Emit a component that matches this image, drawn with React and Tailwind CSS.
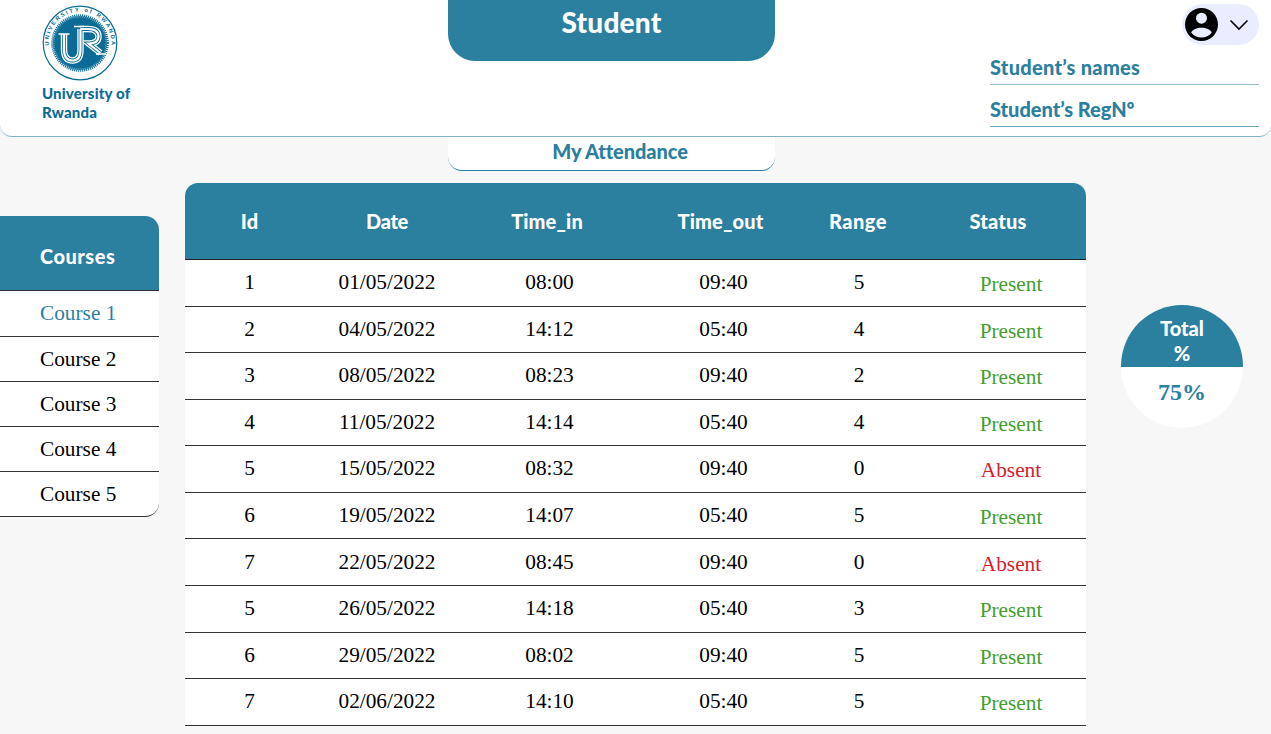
import React from "react";

const display = "font-['Lato',sans-serif] font-black whitespace-nowrap";
const rows = [
  ["1", "01/05/2022", "08:00", "09:40", "5", "Present"],
  ["2", "04/05/2022", "14:12", "05:40", "4", "Present"],
  ["3", "08/05/2022", "08:23", "09:40", "2", "Present"],
  ["4", "11/05/2022", "14:14", "05:40", "4", "Present"],
  ["5", "15/05/2022", "08:32", "09:40", "0", "Absent"],
  ["6", "19/05/2022", "14:07", "05:40", "5", "Present"],
  ["7", "22/05/2022", "08:45", "09:40", "0", "Absent"],
  ["5", "26/05/2022", "14:18", "05:40", "3", "Present"],
  ["6", "29/05/2022", "08:02", "09:40", "5", "Present"],
  ["7", "02/06/2022", "14:10", "05:40", "5", "Present"],
];
const courses = ["Course 1", "Course 2", "Course 3", "Course 4", "Course 5"];
const columns = "grid grid-cols-[129px_146px_179px_169px_102px_176px] items-center text-center";

const monogram = (
  <>
    <path d="M22 29v15c0 8 3 11.500 8.500 11.500s8-3.500 8-10.500V24" />
    <path d="M38.500 24h7.500c7 0 10.500 2.500 10.500 7.500s-3.500 7-10 7l12 9.500" />
  </>
);

function Seal() {
  return (
    <svg className="block h-[76px] w-[76px]" viewBox="0 0 76 76">
      <circle cx="38" cy="38" r="36.8" fill="white" stroke="#0a6c96" strokeWidth="1.2" />
      <circle cx="38" cy="38" r="27" fill="#0a6c96" />
      <circle cx="38" cy="38" r="27.6" fill="none" stroke="#0a6c96" strokeWidth="2.4" strokeDasharray="1.1 0.9" />
      <circle cx="38" cy="38" r="26" fill="none" stroke="#a9cbd9" strokeWidth="0.8" strokeDasharray="1 1" />
      <path id="seal-arc" d="M7.080 43.450 A31.4 31.4 0 1 1 68.920 43.450" fill="none" />
      <text fill="#0a6c96" fontSize="5.6" fontWeight="700" fontFamily="Liberation Sans, sans-serif">
        <textPath href="#seal-arc" startOffset="3" textLength="103">UNIVERSITY of RWANDA</textPath>
      </text>
      <g fill="none" stroke="white" strokeWidth="6.4">{monogram}</g>
      <g fill="none" stroke="#0a6c96" strokeWidth="3.8">{monogram}</g>
      <g fill="none" stroke="white" strokeWidth="2.2">{monogram}</g>
      <path d="M16.500 29h11M32 21.500h10M54 49h10" stroke="white" strokeWidth="1.300" fill="none" />
    </svg>
  );
}

export default function App() {
  return (
    <div className="h-[734px] w-full overflow-hidden bg-[#f7f7f7] font-['Liberation_Serif',serif] text-[21.3px] leading-6 text-black">
      <header className="flex h-[137px] justify-between rounded-b-[12px] border-b border-[#80b2c5] bg-white">
        <div className="w-[448px] pl-[42px] pt-[5px]">
          <Seal />
          <div className={`${display} pt-[3px] text-[15px] leading-[19px] tracking-[0.18px] text-[#0a6c96]`}>University of<br />Rwanda</div>
        </div>
        <div className="flex h-[61px] w-[327px] justify-center rounded-b-[27px] bg-[#2b7f9f] pt-[4px]">
          <h1 className={`${display} text-[28px] leading-[36px] tracking-[0.2px] text-white`}>Student</h1>
        </div>
        <div className="flex w-[496px] flex-col pl-[215px] pr-3 pt-1">
          <button className="flex h-[41px] w-[77px] items-center gap-[11px] self-end rounded-full bg-[#e9edff] pl-[3px]">
            <svg className="h-[33px] w-[33px]" viewBox="0 0 33 33">
              <circle cx="16.5" cy="16.5" r="16.5" />
              <circle cx="16.5" cy="10.200" r="5.500" fill="#e9edff" />
              <path d="M6.200 24.500c2.500-6.500 18.100-6.500 20.600 0-4.500 6.700-16.100 6.700-20.600 0z" fill="#e9edff" />
            </svg>
            <svg className="h-[12px] w-[20px]" viewBox="0 0 20 12" fill="none" stroke="black" strokeWidth="1.6"><path d="m1.500 1.500 8.500 8.500 8.500-8.500" /></svg>
          </button>
          <div className={`${display} h-[40px] border-b border-[#95bfcf] pt-[10px] text-[20px] tracking-[0.28px] text-[#2b7f9f]`}>Student’s names</div>
          <div className={`${display} h-[42px] border-b border-[#6ba6bc] pt-[12px] text-[20px] tracking-[-0.02px] text-[#2b7f9f]`}>Student’s RegNº</div>
        </div>
      </header>
      <div className="flex items-start">
        <aside className="mt-[79px] w-[159px] overflow-hidden rounded-r-[14px] border-b border-[#333] bg-white">
          <div className={`${display} h-[75px] border-b border-[#333] bg-[#2b7f9f] pl-[40px] pt-[28px] text-[20px] tracking-[0.5px] text-white`}>Courses</div>
          {courses.map((c, i) => (
            <div key={c} className={`flex h-[45.1px] items-center pl-[40px] pb-px ${i ? "border-t border-[#333]" : "text-[#2b7f9f]"}`}>{c}</div>
          ))}
        </aside>
        <main className="ml-[26px] w-[901px]">
          <div className="ml-[263px] flex h-[34px] w-[327px] justify-center rounded-b-[14px] border-b border-[#2b7f9f] bg-white pl-[17px] pt-[2px] text-[#2b7f9f]">
            <h2 className={`${display} text-[20px] tracking-[-0.08px]`}>My Attendance</h2>
          </div>
          <section className="mt-[12px] overflow-hidden rounded-t-[13px] bg-white">
            <div className={`${columns} ${display} h-[77px] border-b border-[#222] bg-[#2b7f9f] text-[20px] tracking-[0.15px] text-white`}>
              <span>Id</span><span className="tracking-[-0.3px]">Date</span><span className="pr-[5px]">Time_in</span><span className="pr-[6px]">Time_out</span><span className="pr-[2px] tracking-[0.5px]">Range</span><span>Status</span>
            </div>
            {rows.map((r, i) => (
              <div key={i} className={`${columns} h-[46.58px] border-b border-[#333]`}>
                {r.map((v, j) => (
                  <span key={j} className={j < 5 ? "pb-[1.500px]" : v === "Present" ? "pl-[26px] pt-[2.500px] text-[#43a02a]" : "pl-[26px] pt-[2.500px] text-[#d5202f]"}>{v}</span>
                ))}
              </div>
            ))}
          </section>
        </main>
        <div className="ml-[35px] mt-[168px] h-[123px] w-[122px] overflow-hidden rounded-full bg-white text-center">
          <div className={`${display} h-[62px] bg-[#2b7f9f] pt-[11px] text-[20px] leading-[25px] text-white`}>Total<br />%</div>
          <div className="pt-[13px] text-[24px] font-bold text-[#2b7f9f]">75%</div>
        </div>
      </div>
    </div>
  );
}
